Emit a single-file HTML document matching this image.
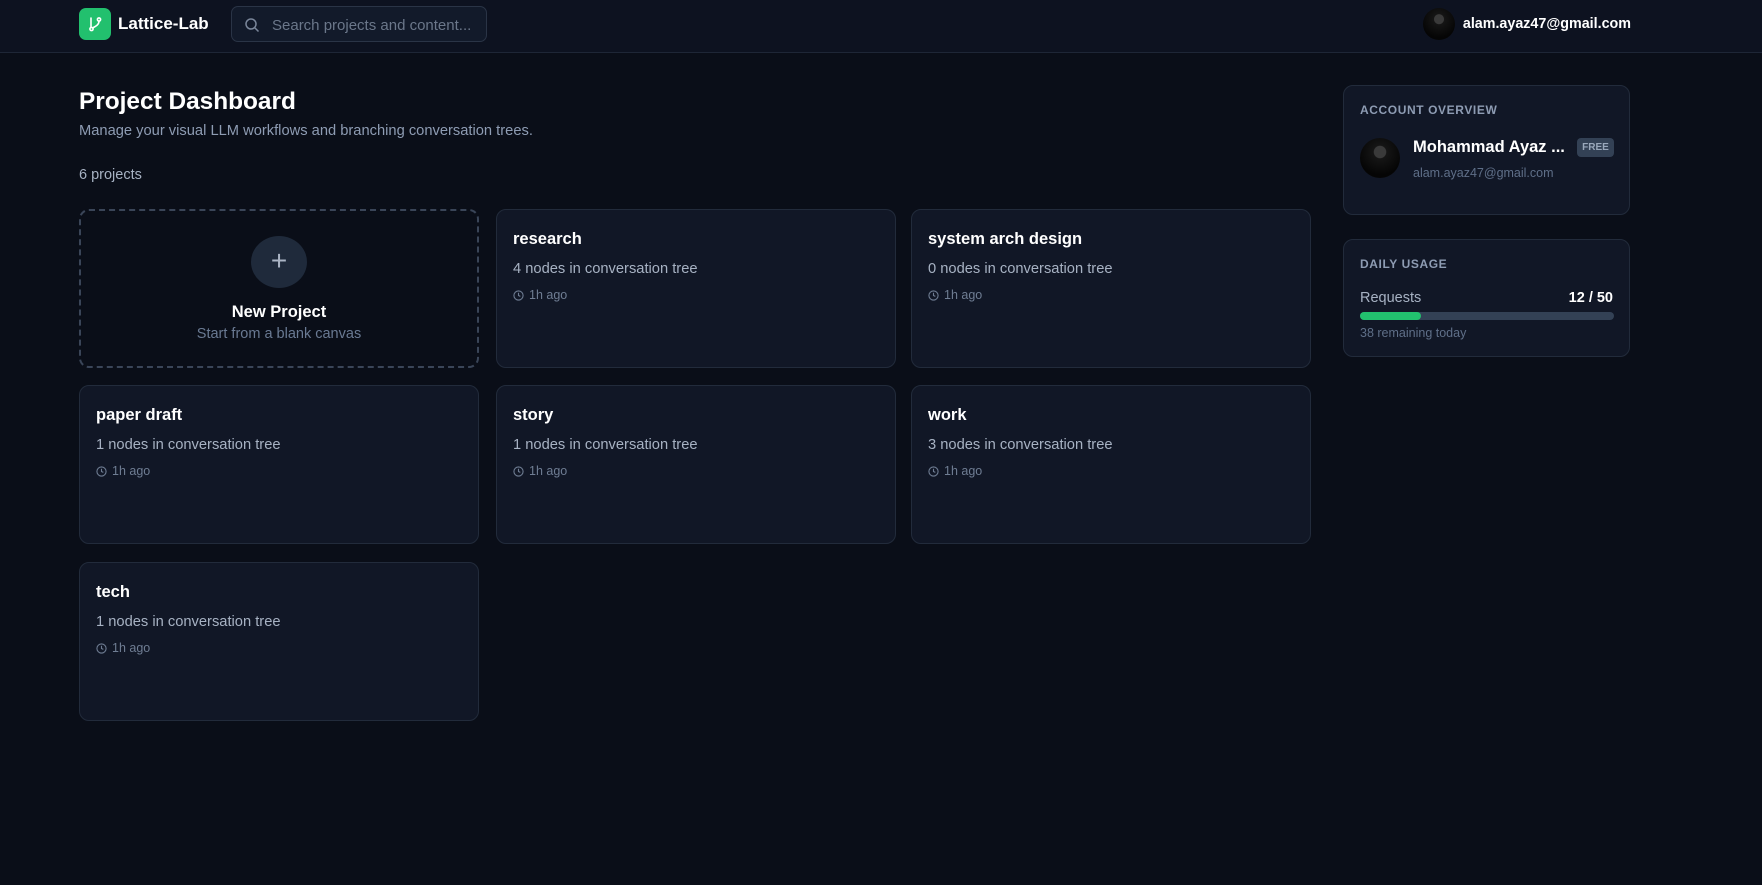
<!DOCTYPE html>
<html><head><meta charset="utf-8"><style>
*{box-sizing:border-box;margin:0;padding:0}
body{width:1762px;height:885px;background:#0a0e18;font-family:"Liberation Sans",sans-serif;color:#fff;position:relative;overflow:hidden}
.hdr{position:absolute;left:0;top:0;width:1762px;height:53px;background:#0d1220;border-bottom:1px solid #1e2636}
.logo{position:absolute;left:79px;top:8px;width:32px;height:32px;border-radius:7px;background:#22c06e}
.brand{position:absolute;left:118px;top:14px;font-size:17px;font-weight:bold}
.search{position:absolute;left:231px;top:6px;width:256px;height:36px;border:1px solid #2a3446;border-radius:7px;background:#121a2a;color:#6b778a;font-size:15px;padding:10px 0 0 40px}
.av{position:absolute;border-radius:50%;background:radial-gradient(circle at 50% 35%,#3a3a3a 0 18%,#151515 20%,#050505 70%)}
.email{position:absolute;right:131px;top:16px;font-size:14.3px;font-weight:bold}
h1{position:absolute;left:79px;top:88px;font-size:24.4px}
.sub{position:absolute;left:79px;top:123px;font-size:14.7px;color:#8e9cb3}
.cnt{position:absolute;left:79px;top:167px;font-size:14.5px;color:#a7b2c3}
.card{position:absolute;width:400px;height:159px;background:#111726;border:1px solid #222b3b;border-radius:10px;padding:20px 16px}
.card b{display:block;font-size:16.5px;margin-top:0}
.card .n{font-size:14.7px;color:#a7b2c3;margin-top:12px}
.card .t{font-size:12.5px;color:#6f7d93;margin-top:11px;display:flex;align-items:center;gap:5px}
.new{position:absolute;left:79px;top:209px;width:400px;height:159px;border:2px dashed #3a4558;border-radius:10px;text-align:center}
.plus{width:56px;height:52px;border-radius:50%;background:#1f2a3b;margin:25px auto 0;color:#aab4c4;font-size:28px;line-height:50px;font-weight:300}
.side{position:absolute;left:1343px;width:287px;background:#111726;border:1px solid #222b3b;border-radius:10px}
.lbl{position:absolute;left:16px;font-size:12px;font-weight:bold;color:#8e9cb3;letter-spacing:.6px}
</style></head><body>
<div class="hdr">
<div class="logo"><svg width="32" height="32" viewBox="0 0 32 32" fill="none" stroke="#fff" stroke-width="1.6" stroke-linecap="round"><circle cx="12.5" cy="21" r="1.6"/><circle cx="20" cy="11.5" r="1.6"/><path d="M12 10v9.4M20 13.1c0 4-4 5.5-6.3 6.8"/></svg></div>
<div class="brand">Lattice-Lab</div>
<div class="search"><svg style="position:absolute;left:12px;top:10px" width="16" height="16" viewBox="0 0 16 16" fill="none" stroke="#7a869a" stroke-width="1.5"><circle cx="7" cy="7" r="5"/><path d="M11 11l3.5 3.5"/></svg>Search projects and content...</div>
<div class="av" style="left:1423px;top:8px;width:32px;height:32px"></div>
<div class="email">alam.ayaz47@gmail.com</div>
</div>
<h1>Project Dashboard</h1>
<div class="sub">Manage your visual LLM workflows and branching conversation trees.</div>
<div class="cnt">6 projects</div>
<div class="new"><div class="plus">+</div><div style="font-size:16.5px;font-weight:bold;margin-top:15px">New Project</div><div style="font-size:14.5px;color:#6a7a93;margin-top:4px">Start from a blank canvas</div></div>
<div class="card" style="left:496px;top:209px"><b>research</b><div class="n">4 nodes in conversation tree</div><div class="t"><svg width="11" height="11" viewBox="0 0 12 12" fill="none" stroke="#6f7d93" stroke-width="1.2"><circle cx="6" cy="6" r="5"/><path d="M6 3v3l2 1"/></svg>1h ago</div></div>
<div class="card" style="left:911px;top:209px"><b>system arch design</b><div class="n">0 nodes in conversation tree</div><div class="t"><svg width="11" height="11" viewBox="0 0 12 12" fill="none" stroke="#6f7d93" stroke-width="1.2"><circle cx="6" cy="6" r="5"/><path d="M6 3v3l2 1"/></svg>1h ago</div></div>
<div class="card" style="left:79px;top:385px"><b>paper draft</b><div class="n">1 nodes in conversation tree</div><div class="t"><svg width="11" height="11" viewBox="0 0 12 12" fill="none" stroke="#6f7d93" stroke-width="1.2"><circle cx="6" cy="6" r="5"/><path d="M6 3v3l2 1"/></svg>1h ago</div></div>
<div class="card" style="left:496px;top:385px"><b>story</b><div class="n">1 nodes in conversation tree</div><div class="t"><svg width="11" height="11" viewBox="0 0 12 12" fill="none" stroke="#6f7d93" stroke-width="1.2"><circle cx="6" cy="6" r="5"/><path d="M6 3v3l2 1"/></svg>1h ago</div></div>
<div class="card" style="left:911px;top:385px"><b>work</b><div class="n">3 nodes in conversation tree</div><div class="t"><svg width="11" height="11" viewBox="0 0 12 12" fill="none" stroke="#6f7d93" stroke-width="1.2"><circle cx="6" cy="6" r="5"/><path d="M6 3v3l2 1"/></svg>1h ago</div></div>
<div class="card" style="left:79px;top:562px"><b>tech</b><div class="n">1 nodes in conversation tree</div><div class="t"><svg width="11" height="11" viewBox="0 0 12 12" fill="none" stroke="#6f7d93" stroke-width="1.2"><circle cx="6" cy="6" r="5"/><path d="M6 3v3l2 1"/></svg>1h ago</div></div>
<div class="side" style="top:85px;height:130px">
<div class="lbl" style="top:17px">ACCOUNT OVERVIEW</div>
<div class="av" style="left:16px;top:52px;width:40px;height:40px"></div>
<div style="position:absolute;left:69px;top:52px;font-size:16.5px;font-weight:bold">Mohammad Ayaz ...</div>
<div style="position:absolute;left:233px;top:52px;width:37px;height:19px;border-radius:4px;background:#334155;color:#9aa8bb;font-size:10px;font-weight:bold;text-align:center;line-height:19px">FREE</div>
<div style="position:absolute;left:69px;top:80px;font-size:12.5px;color:#5f6f88">alam.ayaz47@gmail.com</div>
</div>
<div class="side" style="top:239px;height:118px">
<div class="lbl" style="top:17px">DAILY USAGE</div>
<div style="position:absolute;left:16px;top:50px;font-size:14.5px;color:#a7b2c3">Requests</div>
<div style="position:absolute;right:16px;top:50px;font-size:14.5px;font-weight:bold">12 / 50</div>
<div style="position:absolute;left:16px;top:72px;width:254px;height:8px;border-radius:4px;background:#334155"><div style="width:61px;height:8px;border-radius:4px;background:#22c06e"></div></div>
<div style="position:absolute;left:16px;top:86px;font-size:12.5px;color:#5f6f88">38 remaining today</div>
</div>
</body></html>
